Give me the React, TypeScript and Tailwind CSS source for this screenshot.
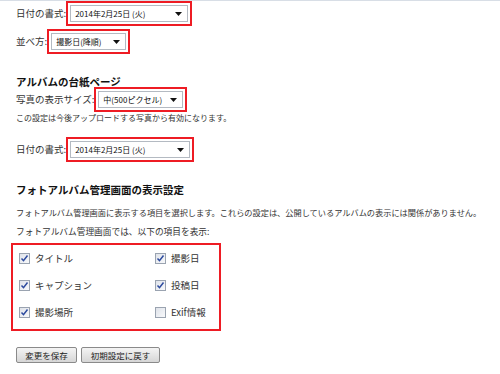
import type { ReactNode } from "react";

const FONT = "font-['Noto_Sans_CJK_JP','Noto_Sans',sans-serif]";

function Arrow() {
  return (
    <svg width="7" height="5" viewBox="0 0 7 5" className="shrink-0">
      <path d="M0 1h7L3.5 5z" fill="#111" />
    </svg>
  );
}

// red highlight around a select box
function Select({ value, width }: { value: string; width: string }) {
  return (
    <div className="border-2 border-[#ee1c24] p-[2px]">
      <div
        className={`${width} h-[17px] flex items-center justify-between bg-white border border-[#b4bac2] pl-[4px] pr-[5px] text-[8px] leading-none text-[#111]`}
      >
        <span className="whitespace-nowrap">{value}</span>
        <Arrow />
      </div>
    </div>
  );
}

function Row({ label, children, className }: { label: string; children: ReactNode; className?: string }) {
  return (
    <div className={`flex items-center h-[25px] ${className ?? ""}`}>
      <span className="text-[9.5px] leading-none text-[#333] whitespace-nowrap">{label}</span>
      {children}
    </div>
  );
}

function Check({ checked, label }: { checked: boolean; label: string }) {
  return (
    <div className="flex items-center h-[27px] gap-[5px]">
      <span className="w-[11px] h-[11px] border border-[#9aa3b0] bg-gradient-to-br from-[#dfe3ea] to-[#f8f9fb] flex items-center justify-center">
        {checked && (
          <svg width="9" height="9" viewBox="0 0 9 9">
            <path d="M1.5 4.5l2 2.2L7.5 1.5" stroke="#2c4a9e" strokeWidth="1.5" fill="none" />
          </svg>
        )}
      </span>
      <span className="text-[9.5px] leading-none text-[#333] whitespace-nowrap">{label}</span>
    </div>
  );
}

function Button({ children, width }: { children: ReactNode; width: string }) {
  return (
    <button
      className={`${width} h-[16px] flex items-center justify-center rounded-[2px] border border-[#8a8a8a] bg-gradient-to-b from-[#f4f4f4] to-[#d6d6d6] text-[8.5px] leading-none text-[#222]`}
    >
      {children}
    </button>
  );
}

export default function App() {
  return (
    <div className={`w-[500px] h-[374px] bg-white overflow-hidden ${FONT}`}>
      <div className="h-px bg-[#d8dee6]" />
      <div className="px-4">
        <Row label="日付の書式:">
          <Select value="2014年2月25日 (火)" width="w-[118px]" />
        </Row>
        <Row label="並べ方:" className="mt-[3px]">
          <Select value="撮影日(降順)" width="w-[75px]" />
        </Row>

        <h2 className="mt-[21px] h-[12px] text-[10.5px] leading-[14px] font-bold text-[#111]">アルバムの台紙ページ</h2>
        <Row label="写真の表示サイズ:">
          <Select value="中(500ピクセル)" width="w-[85px]" />
        </Row>
        <p className="h-[12px] text-[8px] leading-[12px] text-[#333]">この設定は今後アップロードする写真から有効になります。</p>

        <Row label="日付の書式:" className="mt-[13px]">
          <Select value="2014年2月25日 (火)" width="w-[120px]" />
        </Row>

        <h2 className="mt-[21px] h-[14px] text-[10.5px] leading-[14px] font-bold text-[#111]">フォトアルバム管理画面の表示設定</h2>
        <p className="mt-[9px] h-[12px] text-[8.2px] leading-[12px] text-[#333] whitespace-nowrap">
          フォトアルバム管理画面に表示する項目を選択します。これらの設定は、公開しているアルバムの表示には関係がありません。
        </p>
        <p className="mt-[8px] h-[12px] text-[8.7px] leading-[12px] text-[#333]">フォトアルバム管理画面では、以下の項目を表示:</p>
      </div>

      <div className="ml-[11px] mt-[5px] w-[210px] border-2 border-[#ee1c24] pl-[6px] pb-[3px] grid grid-cols-[136px_1fr]">
        <Check checked label="タイトル" />
        <Check checked label="撮影日" />
        <Check checked label="キャプション" />
        <Check checked label="投稿日" />
        <Check checked label="撮影場所" />
        <Check checked={false} label="Exif情報" />
      </div>

      <div className="ml-4 mt-[16px] flex gap-[4px]">
        <Button width="w-[61px]">変更を保存</Button>
        <Button width="w-[79px]">初期設定に戻す</Button>
      </div>
    </div>
  );
}
